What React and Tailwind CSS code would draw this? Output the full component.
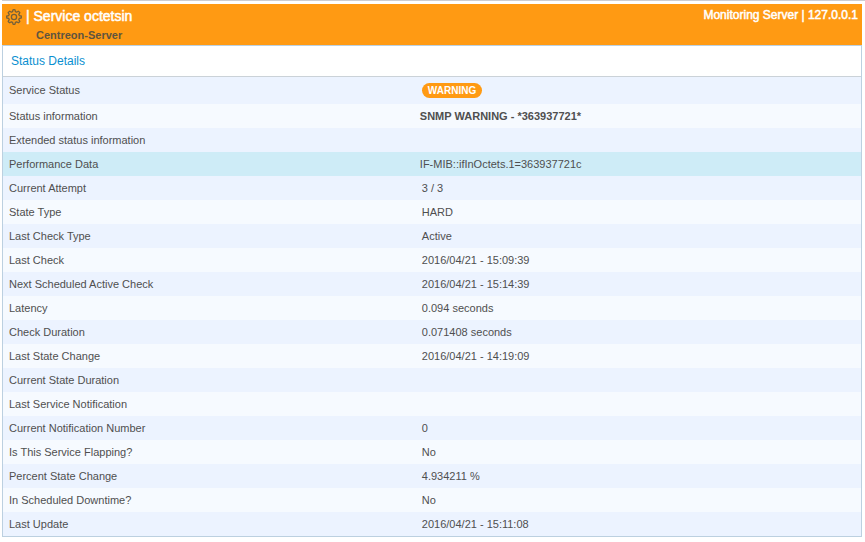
const rows = [
  { label: 'Service Status', badge: 'WARNING' },
  { label: 'Status information', value: 'SNMP WARNING - *363937721*', output: true, bold: true },
  { label: 'Extended status information', value: '' },
  { label: 'Performance Data', value: 'IF-MIB::ifInOctets.1=363937721c', output: true, active: true },
  { label: 'Current Attempt', value: '3 / 3' },
  { label: 'State Type', value: 'HARD' },
  { label: 'Last Check Type', value: 'Active' },
  { label: 'Last Check', value: '2016/04/21 - 15:09:39' },
  { label: 'Next Scheduled Active Check', value: '2016/04/21 - 15:14:39' },
  { label: 'Latency', value: '0.094 seconds' },
  { label: 'Check Duration', value: '0.071408 seconds' },
  { label: 'Last State Change', value: '2016/04/21 - 14:19:09' },
  { label: 'Current State Duration', value: '' },
  { label: 'Last Service Notification', value: '' },
  { label: 'Current Notification Number', value: '0' },
  { label: 'Is This Service Flapping?', value: 'No' },
  { label: 'Percent State Change', value: '4.934211 %' },
  { label: 'In Scheduled Downtime?', value: 'No' },
  { label: 'Last Update', value: '2016/04/21 - 15:11:08' },
];

function GearIcon() {
  return (
    <svg className="size-4" viewBox="0 0 16 16" fill="none" stroke="#75603a" strokeWidth="1.3" strokeLinejoin="round" aria-hidden="true">
      <path d="M7 .8Q8 .5 9 .8L9.400 2.700 10.600 3.200 12.300 2.200Q13.200 2.800 13.800 3.700L12.800 5.400 13.300 6.600 15.200 7Q15.500 8 15.200 9L13.300 9.400 12.800 10.600 13.800 12.300Q13.200 13.200 12.300 13.800L10.600 12.800 9.400 13.300 9 15.200Q8 15.500 7 15.200L6.600 13.300 5.400 12.800 3.700 13.800Q2.800 13.200 2.200 12.300L3.200 10.600 2.700 9.400 .8 9Q.5 8 .8 7L2.700 6.600 3.200 5.400 2.200 3.700Q2.800 2.800 3.700 2.200L5.400 3.200 6.600 2.700Z" />
      <circle cx="8" cy="8" r="2.600" />
    </svg>
  );
}

function StatusRow({ row }) {
  const background = row.active ? 'bg-[#ceecf7]' : 'odd:bg-[#ecf3ff] even:bg-[#f6faff]';
  return (
    <tr className={background}>
      <th scope="row" className={`${row.badge ? 'h-[27px] pb-0.5' : 'h-6'} w-[48%] pl-1.5 text-left font-normal`}>
        {row.label}
      </th>
      <td className={`${row.output ? 'pl-[5px]' : 'pl-[7px]'} ${row.bold ? 'font-bold' : ''}`}>
        {row.badge ? (
          <span className="block w-fit rounded-full bg-[#ff9a13] px-1.5 text-[10px] leading-[15px] font-bold text-white">
            {row.badge}
          </span>
        ) : (
          row.value
        )}
      </td>
    </tr>
  );
}

export default function App() {
  return (
    <main className="bg-white pl-0.5 font-['Liberation_Sans',Arial,sans-serif] text-[11px] leading-4 text-[#4f4f4f]">
      <div className="h-1 border-t border-[#cdcdd2]" />
      <div className="mr-[3px]">
        <header className="flex h-[41px] justify-between bg-[#ff9a13] pr-1 pl-1">
          <div>
            <div className="flex items-start gap-1 pt-1">
              <button type="button" aria-label="Service settings" className="mt-px block">
                <GearIcon />
              </button>
              <h1 className="text-sm leading-4 text-white [-webkit-text-stroke:0.5px_white]">| Service octetsin</h1>
            </div>
            <p className="pt-0.5 pl-[30px] font-bold text-[#5f543f]">Centreon-Server</p>
          </div>
          <p className="pt-[3px] text-xs leading-4 text-white [-webkit-text-stroke:0.5px_white]">Monitoring Server | 127.0.0.1</p>
        </header>
        <section className="border border-[#bcd0e0]">
          <h2 className="h-[31px] border-b border-[#cbd2d8] pl-2 text-xs leading-[30px] text-[#0a8fd0]">Status Details</h2>
          <table className="w-full border-collapse">
            <tbody>
              {rows.map((row) => (
                <StatusRow key={row.label} row={row} />
              ))}
            </tbody>
          </table>
        </section>
      </div>
    </main>
  );
}
